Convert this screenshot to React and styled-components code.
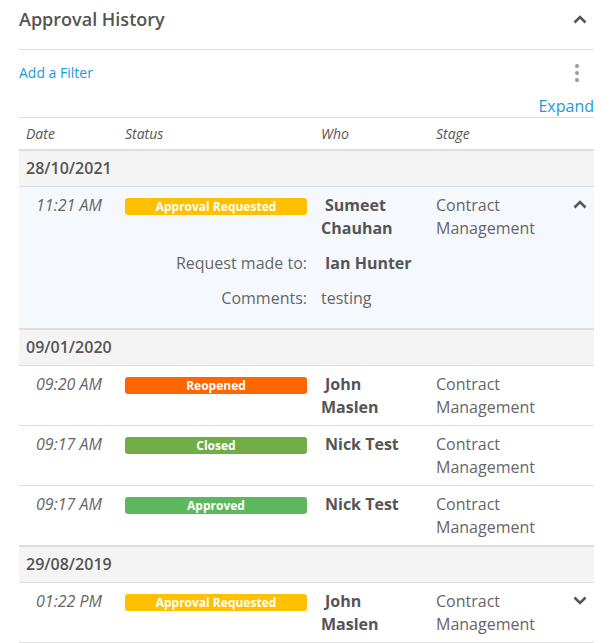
import React from 'react';
import styled, { createGlobalStyle } from 'styled-components';

const GlobalStyle = createGlobalStyle`
  body {
    margin: 0;
    background: #fff;
    font-family: "Open Sans", "Noto Sans", sans-serif;
    color: #555;
  }
`;

const groups = [
  {
    date: '28/10/2021',
    rows: [
      {
        time: '11:21 AM',
        status: 'Approval Requested',
        color: '#ffc000',
        who: 'Sumeet Chauhan',
        stage: 'Contract Management',
        expanded: true,
        requestTo: 'Ian Hunter',
        comments: 'testing',
      },
    ],
  },
  {
    date: '09/01/2020',
    rows: [
      { time: '09:20 AM', status: 'Reopened', color: '#ff6600', who: 'John Maslen', stage: 'Contract Management' },
      { time: '09:17 AM', status: 'Closed', color: '#70ad47', who: 'Nick Test', stage: 'Contract Management' },
      { time: '09:17 AM', status: 'Approved', color: '#5cb85c', who: 'Nick Test', stage: 'Contract Management' },
    ],
  },
  {
    date: '29/08/2019',
    rows: [
      {
        time: '01:22 PM',
        status: 'Approval Requested',
        color: '#ffc000',
        who: 'John Maslen',
        stage: 'Contract Management',
        collapsed: true,
      },
    ],
  },
];

function Chevron({ up }) {
  return (
    <svg width="14" height="9" viewBox="0 0 14 9">
      <polyline
        points={up ? '1.5,7.5 7,2 12.5,7.5' : '1.5,1.5 7,7 12.5,1.5'}
        fill="none"
        stroke="#555"
        strokeWidth="2.6"
      />
    </svg>
  );
}

function HistoryRow({ row }) {
  return (
    <Row expanded={row.expanded}>
      <Time>{row.time}</Time>
      <Cell>
        <Badge color={row.color}>{row.status}</Badge>
      </Cell>
      <Who>{row.who}</Who>
      <Stage>{row.stage}</Stage>
      <Toggle>
        {row.expanded && <Chevron up />}
        {row.collapsed && <Chevron />}
      </Toggle>
      {row.expanded && (
        <>
          <Label>Request made to:</Label>
          <Who>{row.requestTo}</Who>
          <Label>Comments:</Label>
          <Value>{row.comments}</Value>
        </>
      )}
    </Row>
  );
}

export default function App() {
  return (
    <Panel>
      <GlobalStyle />
      <TitleBar>
        <Title>Approval History</Title>
        <Chevron up />
      </TitleBar>
      <FilterBar>
        <FilterLine>
          <Link>Add a Filter</Link>
          <Kebab>
            <span />
            <span />
            <span />
          </Kebab>
        </FilterLine>
        <ExpandLink>Expand</ExpandLink>
      </FilterBar>
      <HeadRow>
        <HeadCell>Date</HeadCell>
        <HeadCell>Status</HeadCell>
        <HeadCell>Who</HeadCell>
        <HeadCell>Stage</HeadCell>
        <HeadCell />
      </HeadRow>
      {groups.map((g) => (
        <Group key={g.date}>
          <GroupHeader>{g.date}</GroupHeader>
          {g.rows.map((r, i) => (
            <HistoryRow key={i} row={r} />
          ))}
        </Group>
      ))}
    </Panel>
  );
}

// Styled Components
const Panel = styled.div`
  padding: 0 19px;
  height: 643px;
  overflow: hidden;
`;

const TitleBar = styled.div`
  box-sizing: border-box;
  height: 50px;
  display: flex;
  justify-content: space-between;
  align-items: flex-start;
  padding: 6px 7px 0 0;
  border-bottom: 1px solid #ddd;

  svg {
    margin-top: 9px;
  }
`;

const Title = styled.h2`
  margin: 0;
  font-size: 18px;
  line-height: 26px;
  font-weight: 600;
  color: #555;
`;

const FilterBar = styled.div`
  height: 67px;
  border-bottom: 1px solid #ddd;
  display: flex;
  flex-direction: column;
`;

const FilterLine = styled.div`
  display: flex;
  align-items: center;
  justify-content: space-between;
  height: 46px;
`;

const Link = styled.span`
  font-size: 14px;
  color: #1b9ad8;
`;

const Kebab = styled.div`
  display: flex;
  flex-direction: column;
  gap: 3px;
  padding-right: 15px;
  span {
    width: 4px;
    height: 4px;
    border-radius: 50%;
    background: #999;
  }
`;

const ExpandLink = styled.span`
  align-self: flex-end;
  font-size: 16px;
  line-height: 22px;
  color: #1b9ad8;
`;

const columns = '99px 196px 115px 1fr 40px';

const HeadRow = styled.div`
  display: grid;
  grid-template-columns: ${columns};
  height: 31px;
  align-items: center;
  border-bottom: 2px solid #ddd;
`;

const HeadCell = styled.div`
  padding: 0 7px;
  font-size: 14px;
  font-style: italic;
  font-weight: 500;
  color: #555;
`;

const Group = styled.div`
  & > div:last-child {
    border-bottom: 2px solid #ddd;
  }
`;

const GroupHeader = styled.div`
  height: 35px;
  line-height: 35px;
  padding: 0 7px;
  background: #f4f4f4;
  border-bottom: 1px solid #ddd;
  font-size: 16px;
  font-weight: 600;
  color: #555;
`;

const Row = styled.div`
  display: grid;
  grid-template-columns: ${columns};
  align-items: start;
  row-gap: 12px;
  padding: 7px 0 ${({ expanded }) => (expanded ? '18px' : '6px')};
  background: ${({ expanded }) => (expanded ? '#f5f9fd' : '#fff')};
  border-bottom: 1px solid #ddd;
  font-size: 16px;
  line-height: 23px;
`;

const Cell = styled.div`
  padding: 0 7px;
`;

const Time = styled(Cell)`
  padding-left: 17px;
  font-style: italic;
  color: #666;
`;

const Badge = styled.div`
  margin-top: 4px;
  height: 17px;
  line-height: 17px;
  border-radius: 3px;
  background: ${({ color }) => color};
  color: #fff;
  font-size: 12px;
  font-weight: 700;
  text-align: center;
`;

const Who = styled(Cell)`
  font-weight: 700;
  color: #555;
  text-indent: 4px;
`;

const Stage = styled(Cell)`
  color: #666;
`;

const Toggle = styled.div`
  display: flex;
  justify-content: flex-end;
  padding: 6px 7px 0 0;
`;

const Label = styled(Cell)`
  grid-column: 1 / 3;
  text-align: right;
  color: #666;
`;

const Value = styled(Cell)`
  grid-column: 3 / 5;
  color: #666;
`;
